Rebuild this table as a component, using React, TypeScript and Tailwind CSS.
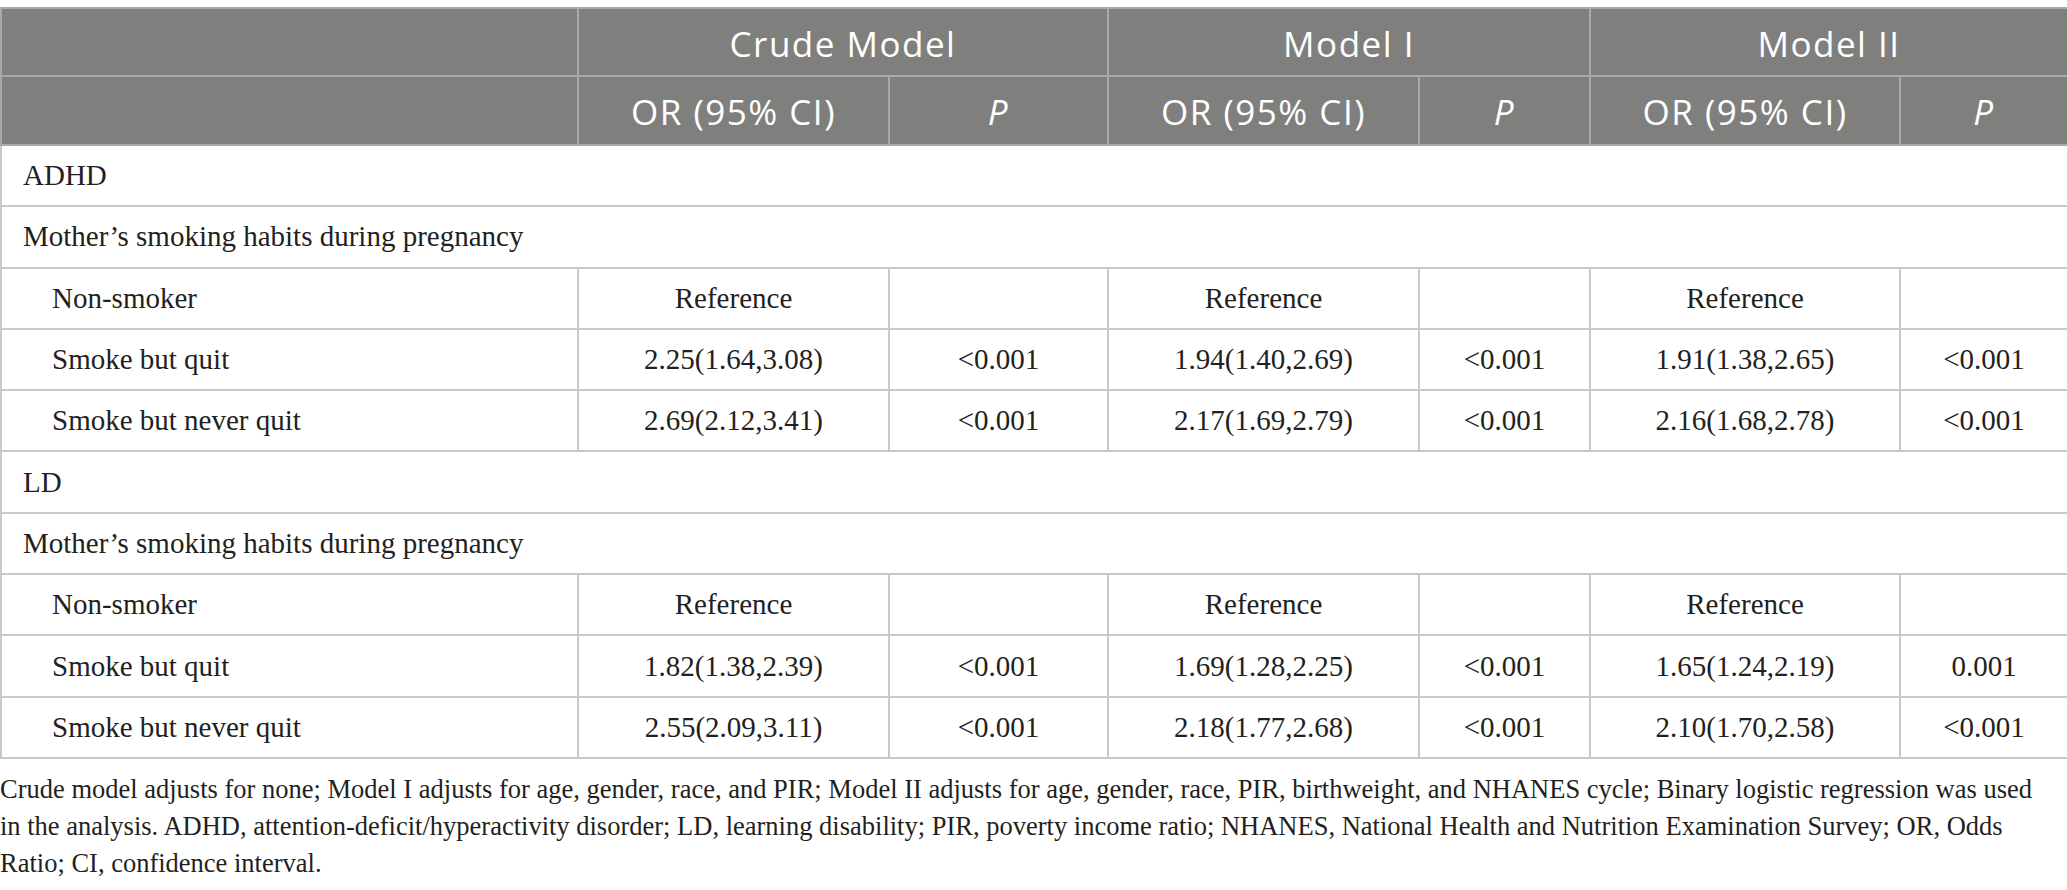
const rows: { label: string; indent?: boolean; cells?: string[] }[] = [
  { label: "ADHD" },
  { label: "Mother’s smoking habits during pregnancy" },
  { label: "Non-smoker", indent: true, cells: ["Reference", "", "Reference", "", "Reference", ""] },
  { label: "Smoke but quit", indent: true, cells: ["2.25(1.64,3.08)", "<0.001", "1.94(1.40,2.69)", "<0.001", "1.91(1.38,2.65)", "<0.001"] },
  { label: "Smoke but never quit", indent: true, cells: ["2.69(2.12,3.41)", "<0.001", "2.17(1.69,2.79)", "<0.001", "2.16(1.68,2.78)", "<0.001"] },
  { label: "LD" },
  { label: "Mother’s smoking habits during pregnancy" },
  { label: "Non-smoker", indent: true, cells: ["Reference", "", "Reference", "", "Reference", ""] },
  { label: "Smoke but quit", indent: true, cells: ["1.82(1.38,2.39)", "<0.001", "1.69(1.28,2.25)", "<0.001", "1.65(1.24,2.19)", "0.001"] },
  { label: "Smoke but never quit", indent: true, cells: ["2.55(2.09,3.11)", "<0.001", "2.18(1.77,2.68)", "<0.001", "2.10(1.70,2.58)", "<0.001"] },
];

const footnote = [
  "Crude model adjusts for none; Model I adjusts for age, gender, race, and PIR; Model II adjusts for age, gender, race, PIR, birthweight, and NHANES cycle; Binary logistic regression was used",
  "in the analysis. ADHD, attention-deficit/hyperactivity disorder; LD, learning disability; PIR, poverty income ratio; NHANES, National Health and Nutrition Examination Survey; OR, Odds",
  "Ratio; CI, confidence interval.",
];

const head = "border-2 border-[#a9a9a9] font-normal text-white text-center text-[35px] tracking-[1.5px] leading-none pt-[2px]";
const body = "border-2 border-[#c9c9c9] text-center";

export default function App() {
  return (
    <div className="min-h-screen bg-white pt-[7px] text-[#231f20] font-['Liberation_Serif',serif]">
      <table className="table-fixed border-collapse w-[2067px]">
        <colgroup>
          <col className="w-[577px]" />
          <col className="w-[311px]" />
          <col className="w-[219px]" />
          <col className="w-[311px]" />
          <col className="w-[171px]" />
          <col className="w-[310px]" />
          <col className="w-[168px]" />
        </colgroup>
        <thead className="bg-[#7f807e] font-['Open_Sans',sans-serif]">
          <tr className="h-[68px]">
            <th className={head} />
            <th className={head} colSpan={2}>Crude Model</th>
            <th className={head} colSpan={2}>Model I</th>
            <th className={head} colSpan={2}>Model II</th>
          </tr>
          <tr className="h-[69px]">
            <th className={head} />
            <th className={head}>OR (95% CI)</th>
            <th className={head}><i>P</i></th>
            <th className={head}>OR (95% CI)</th>
            <th className={head}><i>P</i></th>
            <th className={head}>OR (95% CI)</th>
            <th className={head}><i>P</i></th>
          </tr>
        </thead>
        <tbody className="text-[29px] leading-none">
          {rows.map((r, i) =>
            r.cells ? (
              <tr key={i} className="h-[61.3px]">
                <td className="border-2 border-[#c9c9c9] pl-[50px]">{r.label}</td>
                {r.cells.map((c, j) => (
                  <td key={j} className={body}>{c}</td>
                ))}
              </tr>
            ) : (
              <tr key={i} className="h-[61.3px]">
                <td className="border-2 border-[#c9c9c9] pl-[21px]" colSpan={7}>{r.label}</td>
              </tr>
            )
          )}
        </tbody>
      </table>
      <div className="mt-[12px] text-[26.5px] leading-[37px]">
        {footnote.map((l, i) => (
          <div key={i} className="whitespace-nowrap">{l}</div>
        ))}
      </div>
    </div>
  );
}
